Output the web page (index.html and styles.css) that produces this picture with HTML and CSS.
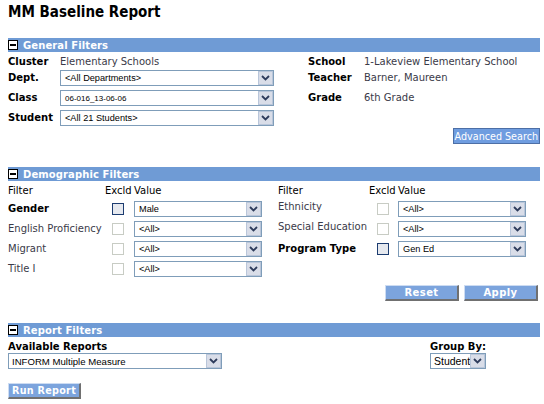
FILE: index.html
```html
<!DOCTYPE html>
<html>
<head>
<meta charset="utf-8">
<title>MM Baseline Report</title>
<link rel="stylesheet" href="styles.css">
</head>
<body>
<div class="page">
  <h1 class="title">MM Baseline Report</h1>

  <section class="panel general">
    <div class="bar"><span class="toggle"></span><span class="bar-text">General Filters</span></div>
    <div class="gen-body">
      <span class="lbl">Cluster</span><span class="val">Elementary Schools</span>
      <span class="lbl">School</span><span class="val">1-Lakeview Elementary School</span>

      <span class="lbl">Dept.</span>
      <span class="select w-gen"><span class="sel-text">&lt;All Departments&gt;</span><span class="arrow"><svg width="9" height="6" viewBox="0 0 9 6"><path d="M1 1 L4.5 4.5 L8 1" fill="none" stroke="#2e3c5c" stroke-width="1.8"/></svg></span></span>
      <span class="lbl">Teacher</span><span class="val">Barner, Maureen</span>

      <span class="lbl">Class</span>
      <span class="select w-gen"><span class="sel-text small">06-016_13-06-06</span><span class="arrow"><svg width="9" height="6" viewBox="0 0 9 6"><path d="M1 1 L4.5 4.5 L8 1" fill="none" stroke="#2e3c5c" stroke-width="1.8"/></svg></span></span>
      <span class="lbl">Grade</span><span class="val">6th Grade</span>

      <span class="lbl">Student</span>
      <span class="select w-gen"><span class="sel-text">&lt;All 21 Students&gt;</span><span class="arrow"><svg width="9" height="6" viewBox="0 0 9 6"><path d="M1 1 L4.5 4.5 L8 1" fill="none" stroke="#2e3c5c" stroke-width="1.8"/></svg></span></span>
    </div>
    <div class="btn-row"><button class="btn btn-adv">Advanced Search</button></div>
  </section>

  <section class="panel demo">
    <div class="bar"><span class="toggle"></span><span class="bar-text">Demographic Filters</span></div>
    <div class="demo-body">
      <div class="demo-col demo-left">
        <span class="head">Filter</span><span class="head">Excld</span><span class="head">Value</span>
        <span class="lbl">Gender</span><span class="cb on"></span>
        <span class="select w-demo"><span class="sel-text">Male</span><span class="arrow"><svg width="9" height="6" viewBox="0 0 9 6"><path d="M1 1 L4.5 4.5 L8 1" fill="none" stroke="#2e3c5c" stroke-width="1.8"/></svg></span></span>
        <span class="val">English Proficiency</span><span class="cb"></span>
        <span class="select w-demo"><span class="sel-text">&lt;All&gt;</span><span class="arrow"><svg width="9" height="6" viewBox="0 0 9 6"><path d="M1 1 L4.5 4.5 L8 1" fill="none" stroke="#2e3c5c" stroke-width="1.8"/></svg></span></span>
        <span class="val">Migrant</span><span class="cb"></span>
        <span class="select w-demo"><span class="sel-text">&lt;All&gt;</span><span class="arrow"><svg width="9" height="6" viewBox="0 0 9 6"><path d="M1 1 L4.5 4.5 L8 1" fill="none" stroke="#2e3c5c" stroke-width="1.8"/></svg></span></span>
        <span class="val">Title I</span><span class="cb"></span>
        <span class="select w-demo"><span class="sel-text">&lt;All&gt;</span><span class="arrow"><svg width="9" height="6" viewBox="0 0 9 6"><path d="M1 1 L4.5 4.5 L8 1" fill="none" stroke="#2e3c5c" stroke-width="1.8"/></svg></span></span>
      </div>
      <div class="demo-col demo-right">
        <span class="head">Filter</span><span class="head">Excld</span><span class="head">Value</span>
        <span class="val">Ethnicity</span><span class="cb"></span>
        <span class="select w-demo"><span class="sel-text">&lt;All&gt;</span><span class="arrow"><svg width="9" height="6" viewBox="0 0 9 6"><path d="M1 1 L4.5 4.5 L8 1" fill="none" stroke="#2e3c5c" stroke-width="1.8"/></svg></span></span>
        <span class="val">Special Education</span><span class="cb"></span>
        <span class="select w-demo"><span class="sel-text">&lt;All&gt;</span><span class="arrow"><svg width="9" height="6" viewBox="0 0 9 6"><path d="M1 1 L4.5 4.5 L8 1" fill="none" stroke="#2e3c5c" stroke-width="1.8"/></svg></span></span>
        <span class="lbl">Program Type</span><span class="cb on"></span>
        <span class="select w-demo"><span class="sel-text">Gen Ed</span><span class="arrow"><svg width="9" height="6" viewBox="0 0 9 6"><path d="M1 1 L4.5 4.5 L8 1" fill="none" stroke="#2e3c5c" stroke-width="1.8"/></svg></span></span>
      </div>
    </div>
    <div class="btn-row"><button class="btn btn-act">Reset</button><button class="btn btn-act">Apply</button></div>
  </section>

  <section class="panel report">
    <div class="bar"><span class="toggle"></span><span class="bar-text">Report Filters</span></div>
    <div class="rep-body">
      <div class="rep-field">
        <span class="lbl">Available Reports</span>
        <span class="select w-rep"><span class="sel-text big">INFORM Multiple Measure</span><span class="arrow"><svg width="9" height="6" viewBox="0 0 9 6"><path d="M1 1 L4.5 4.5 L8 1" fill="none" stroke="#2e3c5c" stroke-width="1.8"/></svg></span></span>
      </div>
      <div class="rep-field">
        <span class="lbl">Group By:</span>
        <span class="select w-grp"><span class="sel-text big">Student</span><span class="arrow"><svg width="9" height="6" viewBox="0 0 9 6"><path d="M1 1 L4.5 4.5 L8 1" fill="none" stroke="#2e3c5c" stroke-width="1.8"/></svg></span></span>
      </div>
    </div>
    <button class="btn btn-run">Run Report</button>
  </section>
</div>
</body>
</html>
```

FILE: styles.css
```css
html, body {
  margin: 0;
  padding: 0;
  background: #fff;
}
body {
  font-family: "DejaVu Sans", Verdana, sans-serif;
  font-size: 10px;
  color: #000;
}
.page {
  width: 532px;
  padding: 0 4px 0 8px;
}
.title {
  margin: 0;
  padding-top: 3px;
  height: 35px;
  font-family: "DejaVu Sans Condensed", "DejaVu Sans", sans-serif;
  font-size: 15px;
  font-weight: bold;
  line-height: 18px;
  color: #000;
}
.bar {
  height: 14px;
  background: #6f9bd5;
  display: flex;
  align-items: center;
  gap: 5px;
}
.toggle {
  width: 8px;
  height: 8px;
  border: 1px solid #000;
  background: #fff;
  position: relative;
  flex: none;
}
.toggle::after {
  content: "";
  position: absolute;
  left: 1px;
  top: 3px;
  width: 6px;
  height: 2px;
  background: #000;
}
.bar-text {
  color: #fff;
  font-weight: bold;
  font-size: 10px;
  letter-spacing: 0.1px;
}
.lbl {
  font-weight: bold;
  color: #000;
  line-height: 16px;
}
.val {
  color: #3a3a48;
  line-height: 16px;
}
.select {
  display: flex;
  height: 16px;
  box-sizing: border-box;
  border: 1px solid #7f9db9;
  background: #fff;
  align-items: center;
}
.sel-text {
  flex: 1;
  font-family: "Liberation Sans", Arial, sans-serif;
  font-size: 9.2px;
  padding-left: 4px;
  color: #000;
  white-space: nowrap;
  overflow: hidden;
}
.sel-text.small {
  font-size: 8px;
}
.sel-text.big {
  font-size: 9.6px;
  padding-left: 3px;
}
.w-grp .sel-text.big {
  font-size: 10.5px;
}
.arrow {
  width: 15px;
  height: 14px;
  box-sizing: border-box;
  border: 1px solid #b9c6da;
  background: #d9dde8;
  display: flex;
  align-items: center;
  justify-content: center;
  flex: none;
}
.gen-body {
  display: grid;
  grid-template-columns: 52px 248px 56px 1fr;
  grid-template-rows: 16px 20px 20px 18px;
  align-items: start;
  padding-top: 2px;
}
.w-gen {
  width: 214px;
}
.btn-row {
  display: flex;
  justify-content: flex-end;
  gap: 5px;
}
.general .btn-row {
  height: 39px;
  align-items: flex-start;
}
.btn {
  font-family: "DejaVu Sans", Verdana, sans-serif;
  font-size: 10px;
  font-weight: bold;
  color: #fff;
  background: #7ca4dd;
  cursor: pointer;
  padding: 0;
  margin: 0;
  white-space: nowrap;
}
.btn-adv {
  height: 16px;
  padding: 0 1px;
  border: 1px solid #4d6fa6;
  font-weight: normal;
  font-size: 9.6px;
  background: #6f9de0;
}
.btn-act {
  height: 16px;
  width: 74px;
  border: 1px solid #cddcf2;
  border-right: 2px solid #707070;
  border-bottom: 2px solid #707070;
  letter-spacing: 0.4px;
}
.demo-body {
  display: grid;
  grid-template-columns: 270px 1fr;
}
.demo-col {
  display: grid;
  grid-auto-rows: 20px;
  align-items: start;
}
.demo-left {
  grid-template-columns: 97px 29px 128px;
}
.demo-right {
  grid-template-columns: 91px 29px 128px;
}
.demo-right .val {
  margin-top: -2px;
}
.head {
  color: #000;
  line-height: 20px;
}
.cb {
  width: 12px;
  height: 12px;
  box-sizing: border-box;
  border: 1px solid #c8ccc4;
  background: #fff;
  margin: 2px 0 0 7px;
}
.demo-right .cb {
  margin-left: 8px;
}
.cb.on {
  border-color: #1c3c70;
  background: #e6e9ef;
}
.demo .btn-row {
  padding-top: 4px;
  height: 38px;
  align-items: flex-start;
  padding-right: 2px;
}
.rep-body {
  display: grid;
  grid-template-columns: 422px auto;
  justify-content: start;
  padding-top: 3px;
}
.rep-field {
  display: flex;
  flex-direction: column;
}
.rep-field .lbl {
  font-size: 10px;
  line-height: 13px;
}
.w-rep {
  width: 214px;
}
.w-grp {
  width: 56px;
}
.btn-run {
  display: block;
  margin-top: 14px;
  height: 16px;
  width: 73px;
  font-size: 9.6px;
  letter-spacing: 0.3px;
  border: 1px solid #cddcf2;
  border-right: 2px solid #707070;
  border-bottom: 2px solid #707070;
}
```
